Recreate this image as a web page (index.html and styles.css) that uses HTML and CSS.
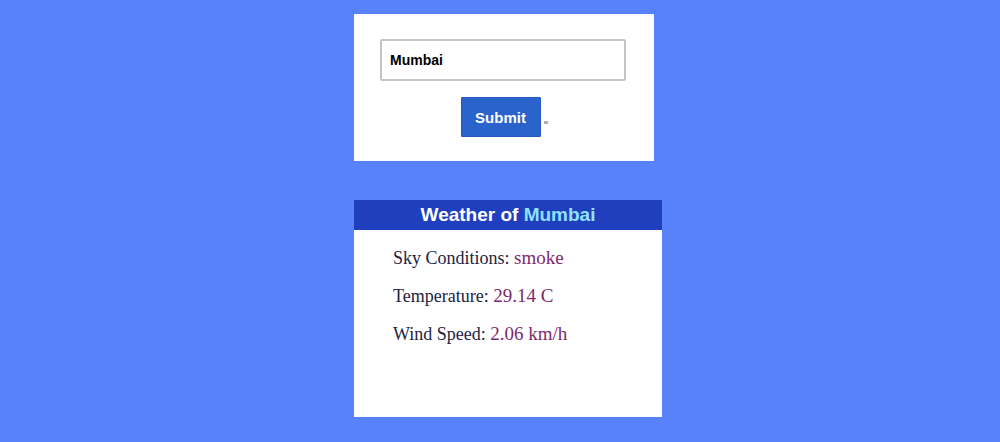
FILE: index.html
```html
<!DOCTYPE html>
<html>
<head>
<meta charset="utf-8">
<link rel="stylesheet" href="styles.css">
</head>
<body>
<div class="page">
  <form class="search-card">
    <input class="city-input" type="text" value="Mumbai">
    <div class="actions">
      <button class="submit-btn" type="button">Submit</button><span class="dot"></span>
    </div>
  </form>
  <div class="weather-card">
    <div class="weather-head">Weather of <span class="city">Mumbai</span></div>
    <div class="weather-body">
      <p class="row">Sky Conditions: <span class="val">smoke</span></p>
      <p class="row">Temperature: <span class="val">29.14 C</span></p>
      <p class="row">Wind Speed: <span class="val">2.06 km/h</span></p>
    </div>
  </div>
</div>
</body>
</html>
```

FILE: styles.css
```css
html, body {
  margin: 0;
  padding: 0;
  background: #5782fb;
  height: 100%;
}
.page {
  display: flex;
  flex-direction: column;
  align-items: flex-start;
  padding: 14px 0 0 354px;
  gap: 39px;
}
.search-card {
  width: 300px;
  height: 147px;
  box-sizing: border-box;
  background: #fff;
  margin: 0;
  padding: 25px 28px 0 26px;
}
.city-input {
  display: block;
  width: 246px;
  height: 42px;
  box-sizing: border-box;
  border: 2px solid #c4c4c4;
  border-radius: 2px;
  padding: 0 0 0 8px;
  font-family: "Liberation Sans", Arial, sans-serif;
  font-weight: bold;
  font-size: 14px;
  color: #000;
  outline: none;
}
.actions {
  margin-top: 16px;
  display: flex;
  justify-content: center;
  align-items: center;
  gap: 3px;
  padding-left: 2px;
}
.submit-btn {
  width: 80px;
  height: 40px;
  border: 1px solid #2459bd;
  background: #2a63cb;
  color: #fff;
  font-family: "Liberation Sans", Arial, sans-serif;
  font-weight: bold;
  font-size: 15px;
  border-radius: 1px;
  padding: 0;
}
.dot {
  width: 4px;
  height: 3px;
  background: #b0b0b0;
  margin-top: 10px;
}
.weather-card {
  width: 308px;
  height: 217px;
  background: #fff;
  box-sizing: border-box;
}
.weather-head {
  height: 30px;
  background: #1f3fbf;
  color: #fff;
  font-family: "Liberation Sans", Arial, sans-serif;
  font-weight: bold;
  font-size: 19px;
  line-height: 30px;
  text-align: center;
}
.city {
  color: #8fe2ff;
}
.weather-body {
  padding: 16px 0 0 39px;
}
.row {
  margin: 0 0 14px 0;
  font-family: "Liberation Serif", "Times New Roman", serif;
  font-size: 18px;
  line-height: 24px;
  color: #23233f;
}
.val {
  color: #7c2a6c;
  font-size: 19px;
}
```
